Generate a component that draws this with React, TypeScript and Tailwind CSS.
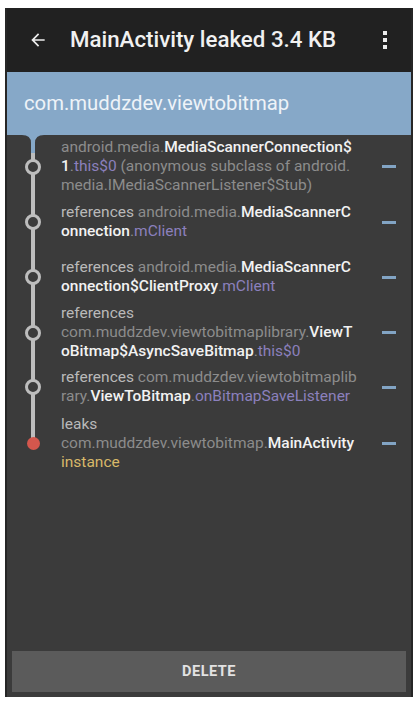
import React from "react";

type Seg = { t: string; c: "ref" | "pkg" | "cls" | "fld" | "ins" };

const color: Record<Seg["c"], string> = {
  ref: "text-[#b9b9b9]",
  pkg: "text-[#8c8c8c]",
  cls: "text-[#f2f2f2] font-medium",
  fld: "text-[#8b80bd]",
  ins: "text-[#d8b869]",
};

// lines are broken where the reference breaks them
const rows: { pt: string; lines: Seg[][]; last?: boolean }[] = [
  {
    pt: "pt-[3px]",
    lines: [
      [
        { t: "android.media.", c: "pkg" },
        { t: "MediaScannerConnection$", c: "cls" },
      ],
      [
        { t: "1", c: "cls" },
        { t: ".", c: "pkg" },
        { t: "this$0", c: "fld" },
        { t: " (anonymous subclass of android.", c: "pkg" },
      ],
      [{ t: "media.IMediaScannerListener$Stub)", c: "pkg" }],
    ],
  },
  {
    pt: "pt-[8px]",
    lines: [
      [
        { t: "references ", c: "ref" },
        { t: "android.media.", c: "pkg" },
        { t: "MediaScannerC", c: "cls" },
      ],
      [
        { t: "onnection", c: "cls" },
        { t: ".", c: "pkg" },
        { t: "mClient", c: "fld" },
      ],
    ],
  },
  {
    pt: "pt-[17px]",
    lines: [
      [
        { t: "references ", c: "ref" },
        { t: "android.media.", c: "pkg" },
        { t: "MediaScannerC", c: "cls" },
      ],
      [
        { t: "onnection$ClientProxy", c: "cls" },
        { t: ".", c: "pkg" },
        { t: "mClient", c: "fld" },
      ],
    ],
  },
  {
    pt: "pt-[8px]",
    lines: [
      [{ t: "references", c: "ref" }],
      [
        { t: "com.muddzdev.viewtobitmaplibrary.", c: "pkg" },
        { t: "ViewT", c: "cls" },
      ],
      [
        { t: "oBitmap$AsyncSaveBitmap", c: "cls" },
        { t: ".", c: "pkg" },
        { t: "this$0", c: "fld" },
      ],
    ],
  },
  {
    pt: "pt-[7px]",
    lines: [
      [
        { t: "references ", c: "ref" },
        { t: "com.muddzdev.viewtobitmaplib", c: "pkg" },
      ],
      [
        { t: "rary.", c: "pkg" },
        { t: "ViewToBitmap", c: "cls" },
        { t: ".", c: "pkg" },
        { t: "onBitmapSaveListener", c: "fld" },
      ],
    ],
  },
  {
    pt: "pt-[9px]",
    last: true,
    lines: [
      [{ t: "leaks", c: "ref" }],
      [
        { t: "com.muddzdev.viewtobitmap.", c: "pkg" },
        { t: "MainActivity", c: "cls" },
      ],
      [{ t: "instance", c: "ins" }],
    ],
  },
];

function Row({ pt, lines, last }: (typeof rows)[number]) {
  return (
    <div className={`flex items-center ${pt}`}>
      <div className="flex w-[52px] shrink-0 justify-center">
        {last ? (
          <div className="relative z-10 h-[13px] w-[13px] rounded-full bg-[#d4574d]" />
        ) : (
          <div className="relative z-10 h-[16px] w-[16px] rounded-full border-[3px] border-[#bdbdbd] bg-[#3b3b3b]" />
        )}
      </div>
      <div className="ml-[2px] w-[310px] text-[15.5px] leading-[19px]">
        {lines.map((line, i) => (
          <div key={i} className="whitespace-pre">
            {line.map((s, j) => (
              <span key={j} className={color[s.c]}>
                {s.t}
              </span>
            ))}
          </div>
        ))}
      </div>
      <div className="flex flex-1 justify-center pr-[4px]">
        <div className="h-[3px] w-[14px] bg-[#82a4c4]" />
      </div>
    </div>
  );
}

export default function App() {
  return (
    <div className="min-h-screen bg-white pl-[5px] pt-[8px]" style={{ fontFamily: "Roboto, 'Liberation Sans', sans-serif" }}>
      <div className="flex h-[689px] w-[408px] flex-col border-x-[2px] border-[#262626] bg-[#3b3b3b]">
        <header className="flex h-[64px] shrink-0 items-center bg-[#212121] text-[#f1f1f1]">
          <svg width="20" height="20" viewBox="0 0 24 24" className="ml-[21px]">
            <path d="M20 11H7.83l5.59-5.59L12 4l-8 8 8 8 1.41-1.41L7.83 13H20v-2z" fill="#ededed" />
          </svg>
          <h1 className="ml-[22px] text-[22.3px] font-medium">MainActivity leaked 3.4 KB</h1>
          <div className="ml-auto mr-[24px] flex flex-col gap-[3px]">
            <span className="h-[4px] w-[4px] bg-[#ededed]" />
            <span className="h-[4px] w-[4px] bg-[#ededed]" />
            <span className="h-[4px] w-[4px] bg-[#ededed]" />
          </div>
        </header>

        <div className="flex h-[63px] shrink-0 items-center bg-[#86a8c8] pl-[17px] text-[20.3px] text-[#eef3f8]">
          com.muddzdev.viewtobitmap
        </div>

        <div className="relative flex-1">
          {/* tree trunk */}
          <div className="absolute left-[24px] top-[10px] h-[297px] w-[4px] bg-[#bdbdbd]" />
          <svg className="absolute left-[15px] top-0" width="22" height="18" viewBox="0 0 22 18">
            <path d="M0 0 H22 Q13 0 13 8 V18 H9 V8 Q9 0 0 0 Z" fill="#86a8c8" />
          </svg>
          {rows.map((r, i) => (
            <Row key={i} {...r} />
          ))}
        </div>

        <div className="shrink-0 px-[5px] pb-[5px]">
          <button className="flex h-[41px] w-full items-center justify-center bg-[#5b5b5b] text-[14.5px] font-bold tracking-[0.5px] text-[#e2e2e2]">
            DELETE
          </button>
        </div>
      </div>
    </div>
  );
}
